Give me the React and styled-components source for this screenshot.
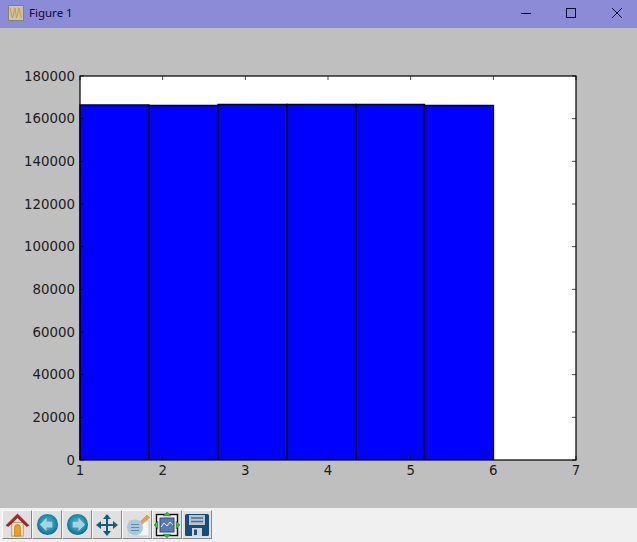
import React from 'react';
import styled, { createGlobalStyle } from 'styled-components';

const GlobalStyle = createGlobalStyle`
  html, body {
    margin: 0;
    padding: 0;
    background: #bfbfbf;
  }
`;

const Win = styled.div`
  width: 637px;
  height: 542px;
  display: flex;
  flex-direction: column;
  overflow: hidden;
`;

const TitleBar = styled.div`
  height: 28px;
  flex: none;
  display: flex;
  align-items: center;
  padding: 0 0 3px 8px;
  box-sizing: border-box;
  background: #8c8bd8;
  color: #0b0b2e;
  font: 11.5px "Noto Sans", "Open Sans", sans-serif;
`;

const TitleText = styled.span`
  margin-left: 5px;
  flex: 1;
`;

const Controls = styled.div`
  display: flex;
  gap: 5px;
`;

const Control = styled.div`
  width: 40.5px;
  height: 24px;
  display: flex;
  align-items: center;
  justify-content: center;
`;

const Canvas = styled.div`
  flex: 1;
  min-height: 0;
  background: #bfbfbf;
`;

const Chart = styled.svg`
  display: block;
  font-family: "DejaVu Sans", sans-serif;
  font-size: 13.33px;
`;

const Toolbar = styled.div`
  height: 34px;
  flex: none;
  display: flex;
  align-items: flex-start;
  padding: 2px 0 0 2px;
  box-sizing: border-box;
  background: #f0f0f0;
`;

const ToolButton = styled.div`
  width: 30px;
  height: 29px;
  box-sizing: border-box;
  display: flex;
  align-items: center;
  justify-content: center;
  background: #e0e0e0;
  border-top: 1px solid #f8f8f8;
  border-left: 1px solid #f8f8f8;
  border-right: 1px solid #888;
  border-bottom: 1px solid #888;
`;

const AXIS = { left: 80, right: 576, top: 76, bottom: 460 };
const edges = [80, 149, 218, 287, 356, 424.5, 493.5];
const tops = [105, 105.5, 104.5, 104.5, 104.5, 105.5];
const yTicks = [0, 20000, 40000, 60000, 80000, 100000, 120000, 140000, 160000, 180000];
const xTicks = [1, 2, 3, 4, 5, 6, 7];

const xPos = (v) => AXIS.left + ((v - 1) * (AXIS.right - AXIS.left)) / 6;
const yPos = (v) => AXIS.bottom - (v * (AXIS.bottom - AXIS.top)) / 180000;

const Histogram = () => (
  <Chart width="637" height="480" viewBox="0 28 637 480">
    <rect x={AXIS.left} y={AXIS.top} width={AXIS.right - AXIS.left} height={AXIS.bottom - AXIS.top} fill="#fff" />
    {tops.map((top, i) => (
      <rect
        key={i}
        x={edges[i]}
        y={top}
        width={edges[i + 1] - edges[i]}
        height={AXIS.bottom - top}
        fill="#0000ff"
      />
    ))}
    {tops.map((top, i) => (
      <path
        key={i}
        d={`M${edges[i]} 460V${top}H${edges[i + 1]}V460`}
        fill="none"
        stroke="#000020"
        strokeWidth="1.3"
      />
    ))}
    {yTicks.map((v) => (
      <g key={v}>
        <path d={`M80 ${yPos(v)}h4M576 ${yPos(v)}h-4`} stroke="#000" strokeWidth="0.7" />
        <text x="75" y={yPos(v) + 4.5} textAnchor="end" fill="#1c1c1c">{v}</text>
      </g>
    ))}
    {xTicks.map((v) => (
      <g key={v}>
        <path d={`M${xPos(v)} 460v-4M${xPos(v)} 76v4`} stroke="#000" strokeWidth="0.7" />
        <text x={xPos(v)} y="474.5" textAnchor="middle" fill="#1c1c1c">{v}</text>
      </g>
    ))}
    <rect x={AXIS.left} y={AXIS.top} width={AXIS.right - AXIS.left} height={AXIS.bottom - AXIS.top} fill="none" stroke="#000" strokeWidth="1.2" />
  </Chart>
);

const FigureIcon = () => (
  <svg width="16" height="16" viewBox="0 0 16 16">
    <rect x="0.5" y="0.5" width="15" height="15" fill="#c8c4b4" stroke="#85826f" />
    <path d="M2 3l2.5 10L7 3l1.5 10L11 3l2.5 10" fill="none" stroke="#cf9a2a" strokeWidth="1" />
  </svg>
);

const HomeIcon = () => (
  <svg width="25" height="25" viewBox="0 0 26 26">
    <rect x="7" y="11" width="12" height="14" fill="#f4e8c4" stroke="#b89a60" />
    <path d="M10 25V16a3 3 0 0 1 6 0v9z" fill="#f0a020" stroke="#a87010" strokeWidth="0.7" />
    <path d="M1 14L13 2l12 12-2.5 1L13 6 3.5 15z" fill="#a8242c" stroke="#7c1820" strokeWidth="0.6" />
  </svg>
);

const ArrowIcon = ({ flip }) => (
  <svg width="23" height="23" viewBox="0 0 24 24">
    <defs>
      <radialGradient id="orb" cx="50%" cy="45%" r="60%">
        <stop offset="0%" stopColor="#58bcd4" />
        <stop offset="65%" stopColor="#1c8cac" />
        <stop offset="100%" stopColor="#0c5a78" />
      </radialGradient>
    </defs>
    <circle cx="12" cy="12" r="11" fill="url(#orb)" />
    <path
      d={flip ? 'M7 9h6V5l7 7-7 7v-4H7z' : 'M17 9h-6V5l-7 7 7 7v-4h6z'}
      fill="#a8d4e2"
    />
  </svg>
);

const MoveIcon = () => (
  <svg width="24" height="24" viewBox="0 0 24 24">
    <path
      d="M12 1l4 5h-3v5h5V8l5 4-5 4v-3h-5v5h3l-4 5-4-5h3v-5H6v3l-5-4 5-4v3h5V6H8z"
      fill="#1c5a7c"
    />
  </svg>
);

const SubplotIcon = () => (
  <svg width="26" height="26" viewBox="0 0 26 26">
    <rect x="5" y="9" width="20" height="15" fill="#f4f6f8" stroke="#c4ccd4" />
    <path d="M14 12L23 3l2.5 2.5-9 8z" fill="#e8a050" stroke="#c88038" strokeWidth="0.5" />
    <circle cx="11" cy="15.5" r="8" fill="#a8cadc" />
    <path d="M7 12.5h8M7 15.5h8M7 18.5h8" stroke="#5c8ca8" strokeWidth="1.2" />
  </svg>
);

const ZoomIcon = () => (
  <svg width="26" height="26" viewBox="0 0 26 26">
    <rect x="2.5" y="2.5" width="21" height="21" fill="#f2f2f2" stroke="#101010" strokeWidth="1.4" />
    <rect x="6" y="6" width="14" height="14" fill="#5878b8" stroke="#384878" />
    <path d="M7 15l3-4 3 3 3-4 3 3" fill="none" stroke="#f0f0f0" strokeWidth="1" />
    <path d="M13 0l4 4H9zM13 26l-4-4h8zM0 13l4-4v8zM26 13l-4 4V9z" fill="#2cb83c" stroke="#188028" strokeWidth="0.4" />
  </svg>
);

const SaveIcon = () => (
  <svg width="26" height="26" viewBox="0 0 26 26">
    <rect x="1" y="2" width="24" height="22" rx="1.5" fill="#144e78" />
    <rect x="5" y="3" width="16" height="10" fill="#b4c4d0" />
    <path d="M7 6h12M7 9.5h12" stroke="#4c6c88" strokeWidth="1.4" />
    <rect x="8" y="16" width="10" height="8" fill="#d0d6dc" />
    <rect x="10" y="17.5" width="3" height="5.5" fill="#24506c" />
  </svg>
);

const tools = [
  <HomeIcon />,
  <ArrowIcon />,
  <ArrowIcon flip />,
  <MoveIcon />,
  <SubplotIcon />,
  <ZoomIcon />,
  <SaveIcon />,
];

const App = () => (
  <Win>
    <GlobalStyle />
    <TitleBar>
      <FigureIcon />
      <TitleText>Figure 1</TitleText>
      <Controls>
        <Control>
          <svg width="12" height="12" viewBox="0 0 12 12">
            <path d="M1 6.5h10" stroke="#0b0b2e" strokeWidth="1" />
          </svg>
        </Control>
        <Control>
          <svg width="12" height="12" viewBox="0 0 12 12">
            <rect x="1.5" y="1.5" width="9" height="9" fill="none" stroke="#0b0b2e" strokeWidth="1" />
          </svg>
        </Control>
        <Control>
          <svg width="12" height="12" viewBox="0 0 12 12">
            <path d="M1 1l10 10M11 1L1 11" stroke="#0b0b2e" strokeWidth="1" />
          </svg>
        </Control>
      </Controls>
    </TitleBar>
    <Canvas>
      <Histogram />
    </Canvas>
    <Toolbar>
      {tools.map((icon, i) => (
        <ToolButton key={i}>{icon}</ToolButton>
      ))}
    </Toolbar>
  </Win>
);

export default App;
